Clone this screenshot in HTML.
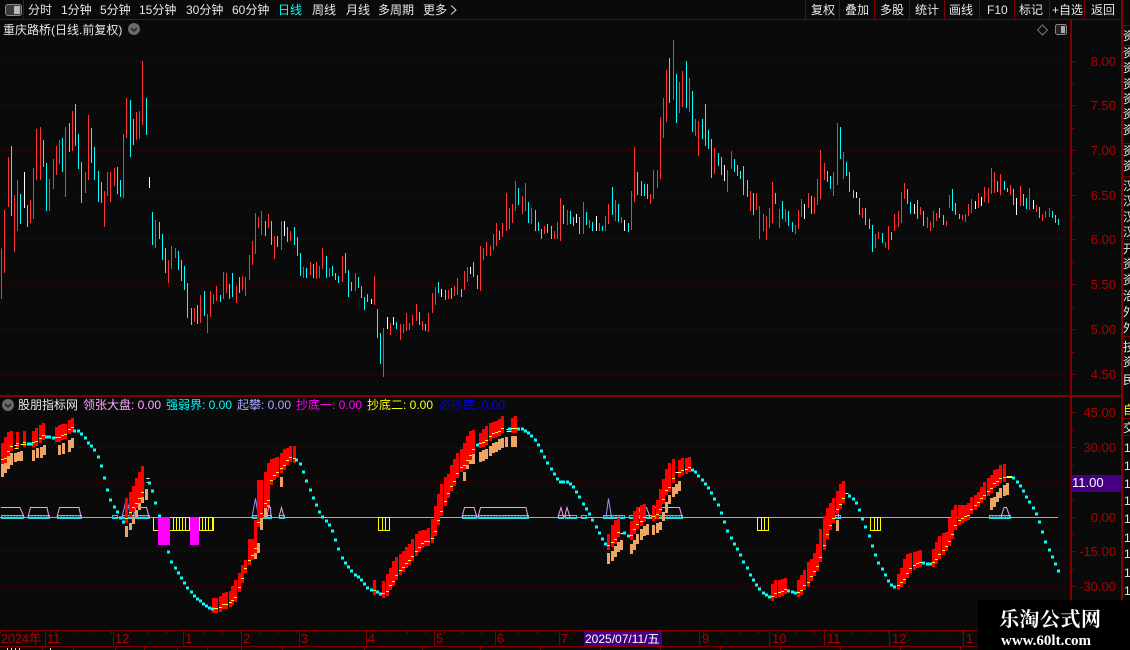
<!DOCTYPE html>
<html><head><meta charset="utf-8"><style>
html,body{margin:0;padding:0;background:#0a0a0a;width:1130px;height:650px;overflow:hidden}
svg{display:block;position:absolute;left:0;top:0}
text{font-family:"Liberation Sans","WenQuanYi Zen Hei","Noto Sans CJK SC",sans-serif;font-size:12px}
.a{fill:#b00000;font-size:13px;text-anchor:end}
.t{fill:#e8e8e8}
.x{fill:#b00000;font-size:13px}
.r{stroke:#f33;fill:none;stroke-width:3}
.c{stroke:#0ff;fill:none;stroke-width:3}
.w{stroke:#fff;fill:none;stroke-width:3}
</style></head><body>
<svg width="1130" height="650" viewBox="0 0 1130 650" xmlns="http://www.w3.org/2000/svg">
<rect width="1130" height="650" fill="#0a0a0a"/>
<!-- grid -->
<g stroke="#5e0606" stroke-dasharray="1 3" shape-rendering="crispEdges" fill="none">
<path d="M0 61.500H1066M0 105.500H1066M0 150.500H1066M0 195.500H1066M0 239.500H1066M0 284.500H1066M0 329.500H1066M0 374.500H1066M0 447.500H1066M0 482.500H1066M0 551.500H1066M0 586.500H1066M1058 517.500H1066"/>
</g>
<!-- candles -->
<g transform="translate(.1667,40) scale(.33333)" shape-rendering="crispEdges">
<path class="r" d="M4 625V777M13 510V699M25 351V501M43 465V636M52 420V573M91 480V549M100 384V537M109 267V420M121 261V420M148 417V513M160 357V447M169 318V405M178 300V372M196 261V471M217 213V333M256 396V459M265 225V420M313 453V561M322 396V468M331 396V486M343 384V438M370 282V474M379 174V294M409 216V300M418 213V297M427 63V255M466 540V624M505 660V729M514 618V687M526 624V654M583 804V846M601 765V849M622 822V879M631 753V831M640 762V792M649 738V783M670 696V777M679 699V759M709 738V789M727 708V750M736 711V768M748 645V720M757 603V675M766 519V642M775 531V564M784 513V585M805 522V564M823 588V657M844 543V630M871 573V603"/>
<path class="c" d="M34 318V528M61 462V552M82 495V561M130 300V381M139 369V513M187 294V396M208 249V336M226 192V318M235 282V387M244 366V489M274 264V369M283 321V420M295 393V486M304 426V489M352 381V462M361 420V471M391 180V351M400 237V315M439 174V285M457 516V615M478 546V597M487 582V660M496 624V699M535 633V690M544 660V723M553 678V750M562 729V834M574 804V855M592 795V852M613 753V828M661 765V786M688 732V777M697 699V771M718 711V759M796 543V588M814 543V615M832 588V621M862 561V606M883 561V615M892 591V648"/>
<path class="w" d="M73 396V504M448 411V444M853 543V588"/>
</g>
<g transform="translate(300.1667,130) scale(.33333)" shape-rendering="crispEdges">
<path class="r" d="M10 411V444M31 396V435M49 396V447M58 408V444M67 354V417M88 414V441M127 378V456M166 429V483M223 438V525M250 594V741M271 579V615M301 582V630M310 582V609M319 549V603M328 579V600M337 555V588M349 522V573M367 573V600M385 549V606M397 489V549M406 471V525M445 480V507M463 468V498M472 444V495M493 423V480M502 411V456M541 348V483M550 354V390M559 336V378M571 348V378M580 312V360M589 279V348M607 279V321M619 189V303M628 234V297M637 222V279M646 153V243M667 198V252M676 159V243M694 234V282M733 288V312M763 303V327M772 276V327M781 204V333M802 240V285M850 216V312M868 270V294M898 279V303M916 258V303M925 222V282M946 210V273M964 261V279M994 183V300M1003 51V216"/>
<path class="c" d="M1 369V438M19 414V444M40 402V444M79 378V444M97 408V438M106 429V450M115 438V459M136 369V429M145 420V501M154 456V483M175 441V474M184 468V504M193 501V540M202 492V516M232 537V624M241 609V702M289 576V597M358 546V585M376 582V603M415 456V489M436 480V510M454 474V507M484 477V501M520 396V441M532 435V477M598 303V330M655 174V225M685 216V279M706 240V303M715 276V303M724 297V327M742 282V309M754 288V327M790 225V282M811 243V282M820 261V288M838 261V312M859 246V285M877 276V303M907 288V303M937 171V255M955 222V276M985 279V306M1012 126V195M1024 153V198M1033 162V198M1042 162V207"/>
<path class="w" d="M214 507V522M262 561V597M280 561V585M424 477V501M511 411V432M829 252V279M889 258V303M973 270V303"/>
</g>
<g transform="translate(640.1667,30) scale(.33333)" shape-rendering="crispEdges">
<path class="r" d="M31 492V522M40 420V507M52 420V474M61 261V447M70 204V324M79 120V276M100 30V210M118 156V249M127 123V231M148 144V246M166 267V318M175 273V378M223 354V432M262 420V486M274 363V417M331 483V543M349 489V540M358 528V627M370 552V603M379 558V630M388 534V594M397 456V579M418 537V594M436 537V576M466 585V612M475 540V597M484 507V561M505 489V534M523 501V552M532 447V525M541 360V507M553 399V450M580 426V498M592 279V465M610 366V447M667 534V564M706 612V654M715 606V627M736 636V654M745 588V660M763 552V603M775 543V591M784 486V579M793 459V507M841 531V555M862 561V594M871 576V603M880 543V594M889 549V573M919 573V588M928 495V534M967 555V570M976 552V576M985 522V558M994 507V549M1015 489V534M1033 471V516M1045 474V519M1054 414V492M1063 426V489M1081 432V495M1111 465V495M1141 468V528M1168 474V540M1189 525V546M1207 552V573M1216 543V564M1228 534V561"/>
<path class="c" d="M88 84V219M109 132V279M139 93V234M157 183V306M187 267V327M196 222V348M205 300V357M214 327V444M235 369V408M244 381V435M283 387V426M292 405V438M301 423V447M310 408V495M322 450V501M340 489V555M406 489V522M427 513V567M445 543V588M457 576V606M514 498V552M562 423V456M571 438V477M601 291V387M619 396V438M628 426V486M640 480V504M658 504V555M676 534V585M688 567V597M697 585V666M727 609V639M754 606V630M802 477V522M811 516V552M832 510V567M850 543V588M898 534V564M910 555V585M937 477V543M946 519V555M958 552V567M1072 453V486M1093 453V480M1102 474V486M1120 477V525M1150 492V528M1159 504V537M1198 531V564M1237 543V564M1246 555V579M1255 567V585"/>
<path class="w" d="M253 405V453M493 522V567M649 486V504M823 522V552M1006 513V537M1024 501V528M1129 504V555M1180 510V537"/>
</g>
<!-- sub chart -->
<g shape-rendering="crispEdges" fill="none">
<path d="M0 517.500H1058" stroke="#a8a0f0"/>
<!-- magenta and yellow boxes -->
<rect x="158" y="517" width="12" height="28" fill="#f0f"/>
<rect x="190" y="517" width="9" height="28" fill="#f0f"/>
<g stroke="#ff0">
<path d="M153.500 517.500V530.500H158M170 530.500H190M199 530.500H213.500V517.500M170 517.500H190M199 517.500H213"/>
<path d="M173.500 518V530M176.500 518V530M179.500 518V530M182.500 518V530M185.500 518V530M189.500 518V530M199.500 518V530M202.500 518V530M205.500 518V530M208.500 518V530M212.500 518V530"/>
<path d="M378.500 517.500H389.500V530.500H378.500ZM382.500 518V530M385.500 518V530"/>
<path d="M757.500 517.500H768.500V530.500H757.500ZM761.500 518V530M764.500 518V530"/>
<path d="M870.500 517.500H880.500V530.500H870.500ZM874.500 518V530M877.500 518V530"/>
</g>
<!-- cyan boxes -->
<g stroke="#25d5e5">
<path d="M1.500 515.500H23.500V518.500H1.500ZM28.500 515.500H49.500V518.500H28.500ZM57.500 515.500H81.500V518.500H57.500ZM112.500 515.500H117.500V518.500H112.500ZM122.500 515.500H149.500V518.500H122.500ZM252.500 515.500H271.500V518.500H252.500ZM279.500 515.500H284.500V518.500H279.500ZM462.500 515.500H476.500V518.500H462.500ZM478.500 515.500H528.500V518.500H478.500ZM558.500 515.500H563.500V518.500H558.500ZM565.500 515.500H576.500V518.500H565.500ZM581.500 515.500H586.500V518.500H581.500ZM603.500 515.500H624.500V518.500H603.500ZM629.500 515.500H633.500V518.500H629.500ZM639.500 515.500H682.500V518.500H639.500ZM835.500 515.500H840.500V518.500H835.500ZM989.500 515.500H1010.500V518.500H989.500Z"/>
<path d="M1 517H23M28 517H49M57 517H81M122 517H149M252 517H271M462 517H476M478 517H528M603 517H624M639 517H682M989 517H1010" stroke-dasharray="2 1"/>
</g>
</g>
<!-- pink trapezoids -->
<g fill="none" stroke-width="1">
<path stroke="#f0a0f0" d="M1 507.500H20L24 517M28 517L30.500 507.500H47L49 517M57 517L59.500 507.500H79L81 517M133 517L136 507.500H146.500L149 517M267 517L268.500 507.500H270.500L271 517M279 517L281.500 507.500L284 517M462 517L464.500 507.500H474L477 517M478 517L480.500 507.500H526L528 517M558 517L561 507.500L563.500 517M564.500 517L567 507.500L570 517M638 517L640 507.500H646.500L650 517M652 517L654.500 507.500H679.500L682 517M835.500 511.500H838.500V517M1001 517L1004 507.500H1006.500L1010 517"/>
<path stroke="#9f90ff" d="M122 517L126.500 498.500L131 517M252 517L255.500 498.500L258.500 517M606 517L608.500 498.500L611.500 517"/>
</g>
<!-- red + orange bars -->
<g transform="translate(1.5,0)" shape-rendering="crispEdges">
<path stroke="#eca566" fill="none" stroke-width="3" d="M1 477V463M4 473V463M7 469V455M10 465V453M14 462V453M17 461V452M20 461V451M32 461V450M36 458V448M40 458V447M43 455V445M58 455V445M62 454V443M68 452V440M71 448V438M125 537V526M129 530V523M132 524V518M135 517V510M138 510V502M141 503V494M145 500V489M280 487V477M260 530V518M257 553V543M254 559V548M267 507V497M264 517V507M463 481V472M466 469V463M469 464V459M472 464V454M479 462V452M482 461V450M485 459V449M489 456V446M492 453V443M495 452V442M498 450V439M501 448V438M505 447V437M511 447V436M514 447V436M607 564V553M611 561V551M614 557V546M617 552V542M620 550V540M630 554V544M633 550V540M636 544V534M640 540V529M643 536V526M646 535V524M652 535V525M656 533V523M659 530V522M662 521V512M665 513V502M668 504V495M672 497V487M675 494V484M678 491V481M836 531V520M990 510V498M993 507V497M996 502V492M999 498V488M1003 496V485M1006 495V483"/>
<defs><path id="rb" d="M1 464V443M4 463V437M7 456V432M10 451V431M16 448V432M23 447V431M32 447V431M35 446V428M39 443V425M42 440V423M55 442V427M58 442V425M61 440V424M64 439V424M68 434V420M71 432V418M125 523V498M129 517V492M132 512V486M135 508V478M138 503V472M141 497V466M212 613V598M215 613V598M219 612V596M222 609V593M225 609V592M229 607V591M231 605V586M234 602V580M238 592V573M241 583V565M244 573V560M248 565V539M251 560V539M254 553V520M257 527V480M260 518V480M264 508V472M267 505V463M270 485V459M273 480V458M276 477V457M280 473V453M283 470V449M286 465V448M289 462V446M293 463V446M373 595V580M382 598V581M386 596V574M389 590V568M392 586V561M395 580V557M399 575V554M402 572V551M405 568V547M408 565V544M411 561V539M415 556V534M418 552V531M421 548V530M424 546V530M427 546V528M431 543V519M434 536V506M437 525V494M440 516V484M444 506V477M447 498V474M450 491V465M453 486V459M456 478V453M460 472V449M463 470V443M466 465V436M469 460V431M472 454V430M479 448V433M482 447V429M485 445V426M489 441V423M492 438V422M495 437V421M498 436V419M501 433V416M511 433V418M514 433V416M607 550V534M611 547V525M614 544V520M617 537V518M630 540V521M633 534V511M636 529V507M640 526V505M643 522V504M652 521V505M656 519V500M659 514V489M662 504V479M665 495V469M668 492V463M672 483V459M678 477V460M681 475V458M685 474V458M688 472V457M771 601V584M774 598V580M778 597V580M781 596V579M784 594V578M797 597V580M800 595V575M803 590V570M807 587V562M810 581V559M813 576V553M816 571V544M819 562V529M823 550V516M826 539V508M829 530V503M832 523V498M836 514V491M839 509V484M842 503V481M897 590V574M900 587V568M903 584V559M906 578V554M909 573V553M913 570V552M916 568V551M919 567V550M932 567V549M935 564V542M938 559V536M942 555V533M945 551V532M948 546V518M951 539V510M954 530V505M958 525V505M961 523V505M964 521V505M967 520V503M970 514V497M974 510V495M977 507V492M980 503V487M983 500V482M987 496V478M990 493V475M993 488V470M996 486V469M999 483V465M1003 482V464"/></defs>
<use href="#rb" fill="none" stroke="#f00" stroke-width="3"/>
<use href="#rb" fill="none" stroke="#ff0" stroke-width="3" stroke-dasharray="0 4 1 999"/>
<path stroke="#fff" stroke-width="1" fill="none" d="M13 445.500H17M145 478.500H148M505 429.500H510M619 533.500H623M674 472.500H678M844 493.500H847M1005 477.500H1011"/>
<path stroke="#ff0" stroke-width="1" fill="none" d="M13 448.500H17M19 444.500H25M145 482.500H148M505 431.500H510M1005 476.500H1011"/>
</g>
<!-- cyan dots -->
<g shape-rendering="crispEdges" transform="translate(-1,0)"><path stroke="#0ff" stroke-width="3" fill="none" d="M28 444h3M31 444h3M46 437h3M49 437h3M53 438h3M74 431h3M78 431h3M81 434h3M85 438h3M88 443h3M91 446h3M94 450h3M98 457h3M101 466h3M104 478h3M107 490h3M110 500h3M114 507h3M117 512h3M120 518h3M123 522h3M149 483h3M152 491h3M155 503h3M159 516h3M168 552h3M171 562h3M175 568h3M178 573h3M181 578h3M184 583h3M187 588h3M191 592h3M194 596h3M197 599h3M200 601h3M203 604h3M206 606h3M209 608h3M212 609h3M296 460h3M300 464h3M303 472h3M306 481h3M310 490h3M313 498h3M316 505h3M319 512h3M322 517h3M326 521h3M329 525h3M332 531h3M335 540h3M338 549h3M342 558h3M345 563h3M348 567h3M351 571h3M355 575h3M358 577h3M361 580h3M364 584h3M367 588h3M371 590h3M377 592h3M380 594h3M477 445h3M509 429h3M518 429h3M522 429h3M525 431h3M528 433h3M531 436h3M535 440h3M538 445h3M541 451h3M544 457h3M547 463h3M551 469h3M554 474h3M557 479h3M560 482h3M563 482h3M567 482h3M570 484h3M573 487h3M576 492h3M579 497h3M583 504h3M586 509h3M589 514h3M592 520h3M596 527h3M599 533h3M602 539h3M605 544h3M624 533h3M628 536h3M692 470h3M695 472h3M698 476h3M702 480h3M705 484h3M708 488h3M711 493h3M714 499h3M718 505h3M721 513h3M724 522h3M727 531h3M731 538h3M734 544h3M737 549h3M740 555h3M743 562h3M747 568h3M750 575h3M753 580h3M756 585h3M759 589h3M763 593h3M766 595h3M769 597h3M788 591h3M792 592h3M795 593h3M849 496h3M853 499h3M856 503h3M859 510h3M862 519h3M865 527h3M869 536h3M872 546h3M875 555h3M878 563h3M882 569h3M885 575h3M888 581h3M891 585h3M894 587h3M923 563h3M927 564h3M930 564h3M1013 478h3M1017 482h3M1020 486h3M1023 491h3M1026 497h3M1029 502h3M1033 508h3M1036 514h3M1039 522h3M1042 532h3M1045 542h3M1049 550h3M1052 557h3M1055 564h3M1058 571h3"/></g>
<!-- frame lines -->
<g stroke="#800000" fill="none" shape-rendering="crispEdges">
<path stroke-width="1" d="M0 19.500H1122M0 396.500H1122M0 395.500H1122M0 630.500H978M0 646.500H978"/>
<path d="M1070.500 20V396M1071.500 20V396M1070.500 397V630M1071.500 397V630M1121.500 0V650M1122.500 0V650M23.500 0V19M805.500 0V19M839.500 0V19M874.500 0V19M909.500 0V19M944.500 0V19M979.500 0V19M1014.500 0V19M1049.500 0V19M1084.500 0V19"/>
<path d="M1071 61.500h5M1071 105.500h5M1071 150.500h5M1071 195.500h5M1071 239.500h5M1071 284.500h5M1071 329.500h5M1071 374.500h5M1071 83.500h3M1071 128.500h3M1071 173.500h3M1071 217.500h3M1071 262.500h3M1071 307.500h3M1071 352.500h3M1071 412.500h5M1071 447.500h5M1071 482.500h5M1071 517.500h5M1071 551.500h5M1071 586.500h5M1071 430.500h3M1071 465.500h3M1071 500.500h3M1071 534.500h3M1071 569.500h3"/>
<path d="M1123 25.500H1130M1123 35.500H1130M1123 45.500H1130M1123 143.500H1130M1123 176.500H1130M1123 239.500H1130M1123 336.500H1130M1123 418.500H1130M1123 435.500H1130"/>
<path d="M45.500 631V646M113.500 631V646M183.500 631V646M241.500 631V646M299.500 631V646M366.500 631V646M434.500 631V646M495.500 631V646M559.500 631V646M699.500 631V646M769.500 631V646M824.500 631V646M889.500 631V646M963.500 631V646M42.500 647V650M73.500 647V650M115.500 647V650M144.500 647V650M177.500 647V650M207.500 647V650M241.500 647V650M282.500 647V650M364.500 647V650M422.500 647V650M480.500 647V650M540.500 647V650M600.500 647V650M660.500 647V650M720.500 647V650M780.500 647V650M840.500 647V650M900.500 647V650M960.500 647V650"/>
<path d="M0 632H978" stroke-width="3" stroke-dasharray="1 17.500"/>
</g>
<!-- toolbar -->
<g>
<rect x="5.500" y="4.500" width="16" height="11" rx="2.500" fill="#3a3a3a" stroke="#888"/>
<rect x="14" y="6" width="6" height="8" fill="#bbb"/>
<g class="t">
<text x="28" y="14">分时</text>
<text x="61" y="14">1分钟</text>
<text x="100" y="14">5分钟</text>
<text x="139" y="14">15分钟</text>
<text x="186" y="14">30分钟</text>
<text x="232" y="14">60分钟</text>
<text x="278" y="14" fill="#0ff" style="fill:#0ff">日线</text>
<text x="312" y="14">周线</text>
<text x="346" y="14">月线</text>
<text x="378" y="14">多周期</text>
<text x="423" y="14">更多</text>
<text x="811" y="14">复权</text>
<text x="845" y="14">叠加</text>
<text x="880" y="14">多股</text>
<text x="915" y="14">统计</text>
<text x="949" y="14">画线</text>
<text x="987" y="14">F10</text>
<text x="1019" y="14">标记</text>
<text x="1052" y="14">+自选</text>
<text x="1091" y="14">返回</text>
<text x="3" y="34">重庆路桥(日线.前复权)</text>
</g>
<path d="M451 5.500L456 10L451 14.500" stroke="#ddd" fill="none"/>
<circle cx="134" cy="29" r="6" fill="#6a6a6a"/>
<path d="M131 28l3 3 3-3" stroke="#222" stroke-width="1.500" fill="none"/>
<path d="M1042.500 25l5 5-5 5-5-5z" stroke="#777" fill="none"/>
<rect x="1055.500" y="24.500" width="11" height="10" rx="2" fill="#222" stroke="#888"/>
<rect x="1061" y="26" width="4" height="7" fill="#aaa"/>
</g>
<!-- y axis labels -->
<text class="a" x="1116" y="66">8.00</text>
<text class="a" x="1116" y="110">7.50</text>
<text class="a" x="1116" y="155">7.00</text>
<text class="a" x="1116" y="200">6.50</text>
<text class="a" x="1116" y="244">6.00</text>
<text class="a" x="1116" y="289">5.50</text>
<text class="a" x="1116" y="334">5.00</text>
<text class="a" x="1116" y="379">4.50</text>
<text class="a" x="1116" y="417">45.00</text>
<text class="a" x="1116" y="452">30.00</text>
<text class="a" x="1116" y="522">0.00</text>
<text class="a" x="1116" y="556">-15.00</text>
<text class="a" x="1116" y="591">-30.00</text>
<rect x="1072" y="475" width="49" height="17" fill="#440080"/>
<text x="1072" y="487" style="fill:#fff;font-size:13px">11.00</text>
<!-- legend -->
<circle cx="8" cy="405" r="6" fill="#6a6a6a"/>
<path d="M5 404l3 3 3-3" stroke="#222" stroke-width="1.500" fill="none"/>
<text x="18" y="409" fill="#e8e8e8">股朋指标网</text>
<text x="83" y="409" fill="#ffa8ff">领张大盘: 0.00</text>
<text x="166" y="409" fill="#0ff">强弱界: 0.00</text>
<text x="237" y="409" fill="#a8a8ff">起攀: 0.00</text>
<text x="296" y="409" fill="#f0f">抄底一: 0.00</text>
<text x="367" y="409" fill="#ff0">抄底二: 0.00</text>
<text x="439" y="409" fill="#00f">必抄底: 0.00</text>
<!-- time axis -->
<text class="x" x="1" y="643" style="font-size:12.500px">2024年</text>
<text class="x" x="47" y="643">11</text>
<text class="x" x="115" y="643">12</text>
<text class="x" x="185" y="643">1</text>
<text class="x" x="243" y="643">2</text>
<text class="x" x="301" y="643">3</text>
<text class="x" x="368" y="643">4</text>
<text class="x" x="436" y="643">5</text>
<text class="x" x="497" y="643">6</text>
<text class="x" x="561" y="643">7</text>
<rect x="584" y="631" width="78" height="15" fill="#440080"/>
<text x="585" y="643" fill="#fff">2025/07/11/五</text>
<text class="x" x="702" y="643">9</text>
<text class="x" x="772" y="643">10</text>
<text class="x" x="827" y="643">11</text>
<text class="x" x="892" y="643">12</text>
<text class="x" x="966" y="643">1</text>
<!-- bottom fragments -->
<path d="M7 648h1v2h-1zM11 648h1v2h-1zM15 648h1v2h-1zM19 648h1v2h-1zM50 648h1v2h-1z" fill="#ddd"/>
<!-- right clipped column -->
<svg x="1123" y="20" width="7" height="630" viewBox="1123 20 7 630" style="overflow:hidden">
<g fill="#e8e8e8">
<text x="1123" y="40">资</text>
<text x="1123" y="57">资</text>
<text x="1123" y="72">资</text>
<text x="1123" y="88">资</text>
<text x="1123" y="103">资</text>
<text x="1123" y="118">资</text>
<text x="1123" y="134">资</text>
<text x="1123" y="155">资</text>
<text x="1123" y="170">资</text>
<text x="1123" y="190">汉</text>
<text x="1123" y="205">汉</text>
<text x="1123" y="221">汉</text>
<text x="1123" y="236">汉</text>
<text x="1123" y="253">开</text>
<text x="1123" y="268">资</text>
<text x="1123" y="284">资</text>
<text x="1123" y="300">治</text>
<text x="1123" y="316">外</text>
<text x="1123" y="332">外</text>
<text x="1123" y="351">技</text>
<text x="1123" y="366">资</text>
<text x="1123" y="384">民</text>
<text x="1123" y="414" fill="#ff0" style="fill:#ff0">自</text>
<text x="1123" y="432">交</text>
<text x="1124" y="452">1</text>
<text x="1124" y="470">1</text>
<text x="1124" y="488">1</text>
<text x="1124" y="505">1</text>
<text x="1124" y="523">1</text>
<text x="1124" y="542">1</text>
<text x="1124" y="558">1</text>
<text x="1124" y="577">1</text>
<text x="1124" y="595">1</text>
</g>
</svg>
<!-- watermark -->
<rect x="978" y="600" width="152" height="50" fill="#000"/>
<text x="999" y="626" style="fill:#fff;font-size:20px;font-weight:bold;font-family:'Liberation Serif','Noto Serif CJK SC',serif;letter-spacing:.5px">乐淘公式网</text>
<text x="1001" y="645" style="fill:#fff;font-size:15px;font-weight:bold;font-family:'Liberation Serif',serif">www.60lt.com</text>
</svg>
</body></html>
